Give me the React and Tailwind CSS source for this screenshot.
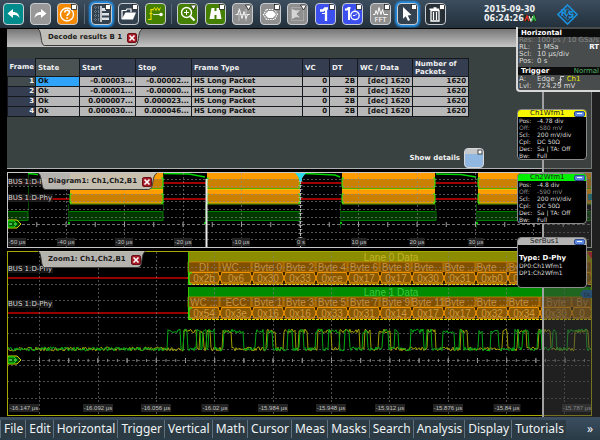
import clsx from "clsx";

const MENU = [
  "File", "Edit", "Horizontal", "Trigger", "Vertical", "Math", "Cursor",
  "Meas", "Masks", "Search", "Analysis", "Display", "Tutorials",
];

const FRAMES = [
  { id: 1, start: "-0.00003...", stop: "-0.00002..." },
  { id: 2, start: "-0.00001...", stop: "-0.00000..." },
  { id: 3, start: "0.000007...", stop: "0.000023..." },
  { id: 4, start: "0.000030...", stop: "0.000046..." },
];

const CHANNELS = [
  { name: "Ch1Wfm1", head: "bg-[#f8f800]", pos: "-4.78 div", off: "-580 mV" },
  { name: "Ch2Wfm1", head: "bg-[#00f000]", pos: "-4.8 div", off: "-590 mV" },
];

const LANES = [
  {
    title: "Lane 0 Data", y: 251, head: "#8c8c00", ink: "#c4b428",
    cells: [
      ["DI", "0x2b"], ["WC ...", "0x6"], ["Byte 0", "0x30"], ["Byte 2", "0x33"],
      ["Byte 4", "0xce"], ["Byte 6", "0x17"], ["Byte 8", "0x17"], ["Byte...", "0x30"],
      ["Byte ...", "0x31"], ["Byte ...", "0xb0"], ["Byte ...", "0x10"], ["Byte", "0x5"], ["By", "f"],
    ],
  },
  {
    title: "Lane 1 Data", y: 286, head: "#008c00", ink: "#3cc83c",
    cells: [
      ["WC ...", "0x54"], ["ECC", "0x3e"], ["Byte 1", "0x16"], ["Byte 3", "0x16"],
      ["Byte 5", "0x33"], ["Byte 7", "0x31"], ["Byte 9", "0x14"], ["Byte 11", "0x17"],
      ["Byte ...", "0x17"], ["Byte ...", "0x32"], ["Byte ...", "0x34"], ["Byte", "0x30"], ["By", "0"],
    ],
  },
];

const ZOOM_TICKS = [
  [24, "-16.147 µs"], [98, "-16.092 µs"], [156, "-16.056 µs"], [215, "-16.02 µs"],
  [273, "-15.984 µs"], [331, "-15.948 µs"], [390, "-15.912 µs"], [448, "-15.876 µs"],
  [507, "-15.84 µs"], [577, "-15.787 µs"],
];

const BURSTS = [[70, 163], [207, 300], [342, 435], [478, 592]];

// x ranges where each data line is high in the zoomed view
const CH2_HIGH = [
  [168, 180], [184, 187], [197, 200], [203, 206], [209, 214], [224, 243], [256, 263],
  [268, 272], [288, 292], [300, 303], [316, 322], [329, 339], [345, 349], [363, 367],
  [383, 388], [395, 398], [411, 423], [427, 431], [443, 454], [460, 463], [479, 482],
  [491, 498], [515, 518], [523, 528], [538, 541], [553, 556], [568, 586],
];
const CH1_HIGH = [
  [184, 196], [200, 203], [207, 210], [223, 231], [267, 275], [284, 295], [299, 307],
  [318, 331], [340, 359], [365, 370], [379, 390], [428, 435], [461, 467], [503, 507],
  [518, 526], [539, 550], [575, 588],
];

function wave(highs, seed) {
  let s = seed;
  const rnd = () => {
    s = (s * 16807) % 2147483647;
    return s / 2147483647 - 0.5;
  };
  let d = "";
  for (let x = 8; x < 592; x += 1) {
    const up = highs.some(([a, b]) => x >= a && x <= b);
    const y = (up ? 330 : 348) + rnd() * 4;
    d += `${d ? "L" : "M"}${x} ${y.toFixed(1)}`;
  }
  return d;
}

const CH1_PATH = wave(CH1_HIGH, 41);
const CH2_PATH = wave(CH2_HIGH, 977);

function Tool({ label, tone, active, mark = "square", children }) {
  return (
    <button
      aria-label={label}
      className={clsx(
        "h-[22px] w-[21px] shrink-0 overflow-hidden rounded-[4px] border border-[#c8ccd0]",
        tone,
        active && "shadow-[0_0_2px_2px_#1f8ee6]"
      )}
    >
      <svg viewBox="0 0 19 20" className="h-full w-full" fill="none" stroke="#fff">
        {children}
        {mark === "square" && <rect x="13.500" y=".500" width="5" height="5" fill="#fff" stroke="#222" strokeWidth=".8" />}
        {mark === "arrow" && <path d="M12.500 1h6l-3 5z" fill="#fff" stroke="#222" strokeWidth=".8" />}
      </svg>
    </button>
  );
}

function Separator() {
  return <div className="h-[20px] w-px bg-[#5c6a78]" />;
}

function Toolbar() {
  return (
    <header className="flex h-[28px] shrink-0 items-center bg-linear-to-b from-[#3c4d5e] to-[#22303b] pl-[3px]">
      <div className="flex gap-[6px]">
        <Tool label="Undo" tone="bg-[#008c8c]" mark="">
          <path d="M3.500 9.500l5.500-4.500v3c4 0 6 2 6.500 6c-1.500-2.500-3.500-3-6.500-3v3z" fill="#fff" stroke="none" />
        </Tool>
        <Tool label="Redo" tone="bg-[#989898]" mark="">
          <path d="M15.500 9.500l-5.500-4.500v3c-4 0-6 2-6.500 6c1.500-2.500 3.500-3 6.500-3v3z" fill="#fff" stroke="none" />
        </Tool>
        <Tool label="Help" tone="bg-[#f58a00]">
          <circle cx="9" cy="10.500" r="6.500" strokeWidth="1.400" />
          <path d="M6.800 8.500c0-3 4.800-3 4.600-.2c0 1.700-2.300 1.700-2.300 3.800M9.100 13.200v1.600" strokeWidth="1.700" />
        </Tool>
      </div>
      <div className="mx-[6px]"><Separator /></div>
      <div className="flex gap-[6px]">
        <Tool label="Signal list" tone="bg-[#34414e]" active>
          <path d="M2 3.500h6M2 7.500h6M2 11.500h6M2 15.500h6M3.500 2v15M6.500 2v15" stroke="#8592a0" strokeWidth=".7" strokeDasharray="1 1" />
          <path d="M9 2v16" strokeWidth="1.400" />
          <path d="M10 4h4v3h-4zM10 9h7v2.500h-7zM10 13.500h7v2.500h-7z" fill="#dde2e6" stroke="none" />
        </Tool>
        <Tool label="Open" tone="bg-[#34414e]">
          <path d="M3 15V6.500h4l1-1.500h4v3" strokeWidth="1.200" />
          <path d="M2.500 15.500l4-7h10.500l-3 7z" fill="#fff" stroke="none" />
        </Tool>
        <Tool label="Autoset" tone="bg-[#458000]" mark="">
          <path d="M2 15.500h3V5.500h2M3.500 9.500h3" stroke="#f0e000" strokeWidth="1.200" />
          <path d="M7 6.500l1.500-3 1.500 3 1.500-3 1.500 3 1.500-3" stroke="#f0e000" strokeWidth=".9" />
          <path d="M7 10.500h7" stroke="#d8e8c0" strokeWidth="1.200" />
          <circle cx="15" cy="10.500" r="1.800" fill="#fff" stroke="none" />
        </Tool>
      </div>
      <div className="mx-[5px]"><Separator /></div>
      <div className="flex w-[45%] justify-between">
        <Tool label="Zoom" tone="bg-[#458000]" mark="arrow">
          <circle cx="8.500" cy="8.500" r="5" strokeWidth="1.400" />
          <path d="M6 8.500h5M8.500 6v5" />
          <path d="M12.300 12.300l4.200 4.200" strokeWidth="2.200" />
        </Tool>
        <Tool label="Find" tone="bg-[#458000]">
          <path d="M5.500 4h3v3h2v-3h3l2 11h-5v-4h-2v4h-5z" fill="#fff" stroke="none" />
        </Tool>
        <Tool label="Measure" tone="bg-[#8f8f8f]" mark="arrow">
          <path d="M2 10.500h15M6 4v13M13 5v12" stroke="#ccc" strokeWidth=".8" />
          <path d="M3 10.500h1.500l2-5 2.500 9 2-7 2 7 1.500-4h2" strokeWidth=".9" />
        </Tool>
        <Tool label="Mask" tone="bg-[#8f8f8f]">
          <path d="M7 7.500h5l2.500 3-2.500 3h-5l-2.500-3z" fill="#fff" />
          <path d="M5.500 5.500h8l3 5-3 5h-8l-3-5z" strokeWidth="1.200" strokeDasharray="1.500 1" />
        </Tool>
        <Tool label="Histogram" tone="bg-[#8f8f8f]" mark="arrow">
          <path d="M3.500 3.500h12v13h-12z" stroke="#ccc" strokeWidth=".8" strokeDasharray="1 1" />
          <path d="M4 5l4 1.500 4-.5-3.500 4 3.500 3.500-4-.500-4 2z" fill="#d5d5d5" stroke="none" />
        </Tool>
        <Tool label="Trigger" tone="bg-[#3c50f0]">
          <path d="M4 6.500h3l2-2h3M10 5v12" strokeWidth="2.300" />
          <path d="M6 9.500h4" />
        </Tool>
        <Tool label="Trigger time" tone="bg-[#3c50f0]">
          <path d="M2 5.500h2l1.500-1.500h2M6 4v12" strokeWidth="2" />
          <circle cx="12" cy="11.500" r="4.200" strokeWidth="1.300" />
          <path d="M12 5.500v2M12 11.500l2-2M10 11.500h2" />
        </Tool>
        <Tool label="FFT" tone="bg-[#8f8f8f]">
          <path d="M2 10.500h2l1-4 1.500 4 1.500-7 2 7 1.500-5 1.500 5h4" />
          <text x="9.500" y="18" fontSize="7" textAnchor="middle" fill="#fff" stroke="none" fontFamily="DejaVu Sans">FFT</text>
        </Tool>
        <Tool label="Select" tone="bg-[#34414e]" active>
          <path d="M5 3l8.500 8-3.800.4 2.300 4.600-2 1-2.200-4.700-2.800 2.500z" fill="#fff" stroke="none" />
        </Tool>
        <Tool label="Delete" tone="bg-[#262e36]">
          <path d="M5 6.500h8v10.500h-8zM7.500 8v8M10.500 8v8" strokeWidth="1.300" />
          <path d="M3.500 5.300h11M7.500 4h3" strokeWidth="1.400" />
        </Tool>
      </div>
      <div className="ml-auto mr-[20px] flex w-[53px] flex-col text-[8px] font-bold leading-[9px] text-[#eef2f4]">
        <span>2015-09-30</span>
        <span className="flex items-center whitespace-nowrap">
          06:24:26
          <svg viewBox="0 0 12 7" className="h-[7px] w-[12px] shrink-0">
            <path d="M0 0h12v7H0z" fill="#203020" />
            <path d="M1 6l2-5 2 5" fill="none" stroke="#e02828" strokeWidth="1.500" />
            <path d="M5 1l2 5 2-5" fill="none" stroke="#e8e8e8" strokeWidth="1.200" />
            <path d="M8 6l2-5 1.500 5" fill="none" stroke="#30b840" strokeWidth="1.500" />
          </svg>
        </span>
      </div>
      <svg viewBox="0 0 22 22" className="mr-[22px] h-[21px] w-[21px]" fill="none" stroke="#1c90dc">
        <path d="M11 1l10 10-10 10-10-10z" strokeWidth="1.700" />
        <path d="M11 5l6 6-6 6-6-6zM9 15l4-8" strokeWidth=".9" />
        <g fill="#1c90dc" stroke="none" fontSize="9" fontWeight="bold" fontFamily="DejaVu Sans">
          <text x="4" y="13">R</text>
          <text x="11.500" y="15">S</text>
        </g>
      </svg>
    </header>
  );
}

function Tab({ title }) {
  return (
    <div className="relative flex h-[17px] w-fit items-center gap-[5px] pl-[10px] pr-[5px]">
      <svg viewBox="0 0 100 17" preserveAspectRatio="none" className="absolute inset-0 h-full w-full">
        <path
          d="M0 0C4 2 2 16 6 16.500H93C98 16 95 3 100 0"
          fill="#c4c2bc"
          fillOpacity=".92"
          stroke="#3c3c3c"
          vectorEffect="non-scaling-stroke"
        />
      </svg>
      <h2 className="relative whitespace-nowrap text-[7px] font-bold leading-[9px] text-[#1c1c1c]">{title}</h2>
      <button aria-label={`Close ${title}`} className="relative size-[10px] rounded-[2px] border border-[#6a1018] bg-[#a81c28]">
        <svg viewBox="0 0 8 8" className="h-full w-full" stroke="#fff" strokeWidth="1.600">
          <path d="M1.500 1.500l5 5M6.500 1.500l-5 5" />
        </svg>
      </button>
    </div>
  );
}

function DecodeResults() {
  const th = "border border-[#15181c] px-[2px] text-left font-bold leading-[8px]";
  const td = "border border-[#15181c] px-[2px]";
  return (
    <section className="flex h-[140px] flex-col border-b border-r border-[#b0b4b4] bg-[#394241]">
      <div className="h-[18px] shrink-0 bg-linear-to-b from-[#767676] to-[#c6c6c6] pl-[31px]">
        <Tab title="Decode results B 1" />
      </div>
      <table className="mt-[11px] w-[461px] table-fixed border-collapse text-[7px] font-bold text-[#111]">
        <colgroup>
          <col className="w-[28px]" />
          <col className="w-[44px]" />
          <col className="w-[56px]" />
          <col className="w-[56px]" />
          <col className="w-[111px]" />
          <col className="w-[27px]" />
          <col className="w-[28px]" />
          <col className="w-[55px]" />
          <col className="w-[56px]" />
        </colgroup>
        <thead className="bg-[#343e50] text-[#f0f0f0]">
          <tr className="h-[18px]">
            <th className="pl-[2px] text-left">Frame</th>
            <th className={clsx(th, "bg-[#4b5252]")}>State</th>
            <th className={th}>Start</th>
            <th className={th}>Stop</th>
            <th className={th}>Frame Type</th>
            <th className={th}>VC</th>
            <th className={th}>DT</th>
            <th className={th}>WC / Data</th>
            <th className={th}>Number of Packets</th>
          </tr>
        </thead>
        <tbody className="bg-[#b8b8b8] leading-[9px]">
          {FRAMES.map((f, i) => (
            <tr key={f.id}>
              <th className={clsx("border border-[#15181c] pr-px text-right text-[#f0f0f0]", i === 0 ? "bg-[#414a4c]" : "bg-[#343e50]")}>
                {f.id}
              </th>
              <td className={clsx(td, i === 0 && "bg-[#30a4f8]")}>Ok</td>
              <td className={clsx(td, "text-right")}>{f.start}</td>
              <td className={clsx(td, "text-right")}>{f.stop}</td>
              <td className={td}>HS Long Packet</td>
              <td className={clsx(td, "text-right")}>0</td>
              <td className={clsx(td, "text-right")}>2B</td>
              <td className={clsx(td, "text-right")}>[dec] 1620</td>
              <td className={clsx(td, "text-right")}>1620</td>
            </tr>
          ))}
        </tbody>
      </table>
      <div className="mt-auto flex items-center justify-end gap-[4px] pr-[107px] text-[7px] font-bold text-[#f0f0f0]">
        <label htmlFor="details">Show details</label>
        <button id="details" className="h-[20px] w-[20px] overflow-hidden rounded-[4px] border border-[#d8d8d8] bg-[#90b8e0]">
          <svg viewBox="0 0 18 18" className="h-full w-full">
            <path d="M0 0h18v5H0z" fill="#c6c8ca" />
            <rect x="13" y="1" width="4" height="4" fill="#fff" stroke="#222" strokeWidth=".8" />
          </svg>
        </button>
      </div>
    </section>
  );
}

function BusLabel({ y }) {
  return (
    <g>
      <rect x="8" y={y - 7} width="45" height="8" fill="#1c1c1c" fillOpacity=".8" />
      <text x="8" y={y - 1} fontSize="7" fill="#d4d4d4" fontFamily="DejaVu Sans, sans-serif">BUS 1:D-Phy</text>
    </g>
  );
}

function TickLabel({ x, y, children }) {
  const w = children.length * 3;
  return (
    <g>
      <rect x={x - w / 2} y={y - 6} width={w} height="8" fill="#242424" />
      <text x={x} y={y} fontSize="6" textAnchor="middle" fill="#c0c0c0" fontFamily="Liberation Sans, Arial, sans-serif">
        {children}
      </text>
    </g>
  );
}

function ChannelMarker({ y }) {
  return (
    <g fill="#003c00">
      <path d={`M8 ${y - 4}h9l4 4-4 4h-9z`} stroke="#d8d800" />
      <path d={`M8 ${y - 3}h6l3 3-3 3h-6z`} fill="#006000" stroke="#00e000" />
      <path d={`M9 ${y}h3M14 ${y}h2`} stroke="#a0ffa0" />
    </g>
  );
}

function Diagram() {
  return (
    <section className="relative">
      <svg viewBox="7 171 585 76" className="block h-auto w-full bg-black">
        {[[7, 28], [68, 163], [206, 300], [341, 436], [477, 592]].map(([a, b]) => (
          <path key={a} d={`M${a} 210.500H${b}V219.500H${a}`} fill="#003800" stroke="#007c00" />
        ))}
        <path d="M28.500 172V210M68.500 203v19M163.500 172v38M205.500 203v20M340.500 203v24M435.500 203v14M476.500 203v24" stroke="#004800" />
        <path d="M68 222h2M204 222h2M340 222h2M476 222h2" stroke="#00c000" strokeWidth="2" />
        <path d="M28 172.500l10 1M164 172.500l25 .5 16 3M305 172.500l30 1.500 5 2M436 173l25 .5 15 2.500" fill="none" stroke="#00d800" strokeWidth="1.500" />
        <path d="M8 182h62M163 182h44M300 182h42M435 182h43M8 198h62M163 198h44M300 198h42M435 198h43" stroke="#a00000" strokeWidth="2" />
        {BURSTS.map(([a, b]) => (
          <g key={a}>
            <path d={`M${a} 172H${b}V187H${a}zM${a} 188H${b}V202H${a}z`} fill="#cc8000" />
            <path d={`M${a} 172H${b}V178H${a}zM${a} 188H${b}V193H${a}z`} fill="#ff9c00" />
            <path d={`M${a} 187.500H${b}M${a} 203H${b}`} stroke="#58a800" />
            <path d={`M${a} 202H${b}M${a} 188.500H${b}`} stroke="#f0c000" />
            <path d={`M${a + 2} 177h-2v9h2M${a + 2} 193h-2v9h2M${b - 2} 177h2v9h-2M${b - 2} 193h2v9h-2`} fill="none" stroke="#10f010" />
          </g>
        ))}
        <g stroke="#8c8c8c" strokeOpacity=".6" strokeDasharray="2 2">
          {[179, 186, 194, 201, 209, 217, 232, 239].map((y) => (
            <path key={y} d={`M7 ${y - 0.5}H592`} />
          ))}
          {[66, 124, 183, 241, 358, 417, 475, 533].map((x) => (
            <path key={x} d={`M${x + 0.5} 172V246`} />
          ))}
        </g>
        <path d="M7 223.500H592" stroke="#777" strokeDasharray="3 2" />
        <path d="M7 223.500H592" stroke="#999" strokeWidth="5" strokeDasharray="1 28.250" />
        <path d="M300.500 172V246" stroke="#b8b8b8" strokeDasharray="3 1" />
        <path d="M300.500 172V246" stroke="#b8b8b8" strokeWidth="4" strokeDasharray="1 3" strokeOpacity=".7" />
        <BusLabel y={184} />
        <BusLabel y={200} />
        <ChannelMarker y={223} />
        {[[17, "-50 µs"], [66, "-40 µs"], [124, "-30 µs"], [183, "-20 µs"], [241, "-10 µs"], [301, "0 s"], [359, "10 µs"], [417, "20 µs"], [476, "30 µs"]].map(([x, t]) => (
          <TickLabel key={t} x={x} y={243}>{t}</TickLabel>
        ))}
        <rect x="7.500" y="171.500" width="584" height="75" fill="none" stroke="#c8c8c8" />
        <path d="M295 172h11l-4 5v3h-3v-3z" fill="#30d8e8" />
        <path d="M206.500 178V246" stroke="#e8e8e8" strokeWidth="2" />
        <rect x="588" y="193" width="4" height="6" fill="#108898" />
      </svg>
      <div className="absolute left-[31px] top-px">
        <Tab title="Diagram1: Ch1,Ch2,B1" />
      </div>
    </section>
  );
}

function Lane({ lane }) {
  const { y } = lane;
  const font = { fontSize: 10, textAnchor: "middle", fontFamily: "Liberation Sans, Arial, sans-serif" };
  return (
    <g>
      <rect x="188" y={y} width="404" height="10" fill={lane.head} />
      <rect x="188" y={y + 10} width="404" height="22" fill="#805000" />
      {lane.cells.map(([name, value], i) => {
        const x = 188 + i * 32;
        const w = Math.min(32, 592 - x);
        return (
          <g key={i}>
            <rect x={x} y={y + 10} width={w - 1} height="10" fill="none" stroke="#d88800" strokeWidth=".7" />
            <path
              d={`M${x + 2} ${y + 20.5}H${x + w - 2}L${x + w} ${y + 26}L${x + w - 2} ${y + 31}H${x + 2}L${x} ${y + 26}z`}
              fill="#8a5800"
              stroke="#f09400"
            />
            <path d={`M${x} ${y + 20}v3M${x} ${y + 29}v3`} stroke="#201400" strokeWidth="1.500" />
            <text x={x + w / 2} y={y + 18.5} fill="#c8903c" {...font}>{name}</text>
            <text x={x + w / 2} y={y + 29.5} fill="#d09840" {...font}>{value}</text>
          </g>
        );
      })}
      <path d={`M188 ${y + 32.5}H592`} stroke="#e0e000" strokeDasharray="3 1" />
      <path d={`M188.500 ${y}V${y + 33}`} stroke="#40c000" />
      <path d={`M192 ${y + 21}h-3v11h3`} fill="none" stroke="#10f010" />
      <text x="391" y={y + 8.5} fill={lane.ink} {...font}>{lane.title}</text>
    </g>
  );
}

function ZoomView() {
  return (
    <section className="relative">
      <svg viewBox="7 250 585 165" className="block h-auto w-full bg-black">
        <path d="M8 277h180M8 312h180" stroke="#980000" strokeWidth="2" />
        {LANES.map((lane) => (
          <Lane key={lane.title} lane={lane} />
        ))}
        <g stroke="#808080" strokeOpacity=".6" strokeDasharray="2 2">
          {[266, 283, 299, 316, 332, 348, 364, 380, 397].map((y) => (
            <path key={y} d={`M7 ${y + 0.5}H592`} />
          ))}
          {[39, 98, 156, 214, 273, 331, 389, 448, 506, 564].map((x) => (
            <path key={x} d={`M${x + 0.5} 251V414`} />
          ))}
        </g>
        <path d="M7 359.500H592" stroke="#555" strokeDasharray="3 2" />
        <path d="M39 359.500H592" stroke="#a8a8a8" strokeWidth="5" strokeDasharray="1 28.200" />
        <path d="M39 359.500H592" stroke="#888" strokeWidth="3" strokeDasharray="1 8.730" />
        <path d={CH1_PATH} fill="none" stroke="#b0b000" strokeWidth=".9" />
        <path d={CH2_PATH} fill="none" stroke="#00a814" strokeWidth="1" />
        <BusLabel y={271} />
        <BusLabel y={306} />
        <ChannelMarker y={359} />
        {ZOOM_TICKS.map(([x, t]) => (
          <TickLabel key={t} x={x} y={409}>{t}</TickLabel>
        ))}
        <rect x="7.500" y="250.500" width="584" height="164" fill="none" stroke="#a8a800" />
        <path d="M587 251h5v7z" fill="#d81020" />
        <path d="M580 293l3-4h9v8h-9z" fill="#1060a0" />
        <text x="583" y="296" fontSize="6" fill="#0c2030" fontFamily="DejaVu Sans">TA</text>
      </svg>
      <div className="absolute left-[31px] top-0">
        <Tab title="Zoom1: Ch1,Ch2,B1" />
      </div>
    </section>
  );
}

function Row({ name, value, dim }) {
  return (
    <div className={clsx("flex whitespace-nowrap", dim && "text-[#8a8a8a]")}>
      <dt className="w-[18px] shrink-0">{name}</dt>
      <dd>{value}</dd>
    </div>
  );
}

function SignalCard({ name, head, children }) {
  return (
    <article className="h-[51px] w-[70px] overflow-hidden rounded-[4px] border border-[#8c8c8c] bg-black text-[6px] leading-[7px] text-[#dcdcdc]">
      <div className={clsx("flex h-[7px] items-center pl-[12px] pr-px text-[7px] leading-[7px] text-[#222]", head)}>
        <span className="flex-1">{name}</span>
        <button aria-label={`Minimize ${name}`} className="flex h-[6px] w-[11px] items-center justify-center rounded-[2px] border border-[#2c4890] bg-[#5c88e0]">
          <span className="h-px w-[5px] bg-white" />
        </button>
      </div>
      {children}
    </article>
  );
}

function Sidebar() {
  return (
    <aside className="absolute -top-px right-0 flex w-[84px] flex-col">
      <div className="h-[65px] rounded-bl-[4px] border-b-2 border-l-2 border-[#d8d8d8] bg-[#484c4c] text-[7px] leading-[7px] text-[#dcdcdc]">
        <h3 className="mt-[2px] bg-[#0c0c0c] pl-[3px] font-bold leading-[8px] text-white">Horizontal</h3>
        <dl className="pl-px">
          <Row name="Res:" value="100 ps / 10 GSa/s" dim />
          <div className="flex justify-between pr-px">
            <Row name="RL:" value="1 MSa" />
            <span className="font-bold text-white">RT</span>
          </div>
          <Row name="Scl:" value="10 µs/div" />
          <Row name="Pos:" value="0 s" />
        </dl>
        <h3 className="mt-[2px] flex justify-between bg-[#0c0c0c] pl-[3px] pr-px font-bold leading-[8px] text-white">
          Trigger <span className="font-normal text-[#50b060]">Normal</span>
        </h3>
        <dl className="mt-px pl-px">
          <Row
            name="A:"
            value={
              <span className="flex items-center gap-[3px]">
                Edge
                <svg viewBox="0 0 7 8" className="h-[7px] w-[6px]" fill="none" stroke="#ddd">
                  <path d="M0 7.500h3v-7h4M1.500 5l1.500-2 1.500 2" />
                </svg>
                <span className="text-[#e8e800]">Ch1</span>
              </span>
            }
          />
          <Row name="Lvl:" value="724.29 mV" />
        </dl>
      </div>
      <div className="ml-px mt-[17px] flex flex-col gap-[13px]">
        {CHANNELS.map((ch) => (
          <SignalCard key={ch.name} name={ch.name} head={ch.head}>
            <dl className="pl-px">
              <Row name="Pos:" value={ch.pos} />
              <Row name="Off:" value={ch.off} dim />
              <Row name="Scl:" value="200 mV/div" />
              <Row name="Cpl:" value="DC 50Ω" />
              <Row name="Dec:" value="Sa | TA: Off" />
              <Row name="Bw:" value="Full" />
            </dl>
          </SignalCard>
        ))}
        <SignalCard name="SerBus1" head="bg-[#b4b4b4]">
          <div className="pl-px pt-[9px]">
            <p className="text-[7px] font-bold leading-[8px] text-white">Type: D-Phy</p>
            <p>DP0:Ch1Wfm1</p>
            <p>DP1:Ch2Wfm1</p>
          </div>
        </SignalCard>
      </div>
    </aside>
  );
}

export default function App() {
  return (
    <div className="flex min-h-screen flex-col bg-black font-['DejaVu_Sans',sans-serif]">
      <Toolbar />
      <main className="relative flex flex-1 flex-col gap-[3px] py-px pl-[7px] pr-[8px]">
        <DecodeResults />
        <Diagram />
        <ZoomView />
        <div className="absolute bottom-0 right-0 top-[63px] w-[58px] border-l-2 border-[#a0a0a0] bg-[#404040]/50" />
        <Sidebar />
      </main>
      <nav className="flex h-[24px] shrink-0 items-center bg-linear-to-b from-[#3c4f62] to-[#283a44] font-['Noto_Sans',sans-serif] text-[12px] leading-[18px] text-[#f0f4f6]">
        {MENU.map((item) => (
          <button key={item} className="border-l border-[#5c7080] bg-[#2b3a43] pl-[3px] pr-[2px]">{item}</button>
        ))}
        <button aria-label="More" className="ml-auto mr-[7px]">»</button>
      </nav>
    </div>
  );
}
